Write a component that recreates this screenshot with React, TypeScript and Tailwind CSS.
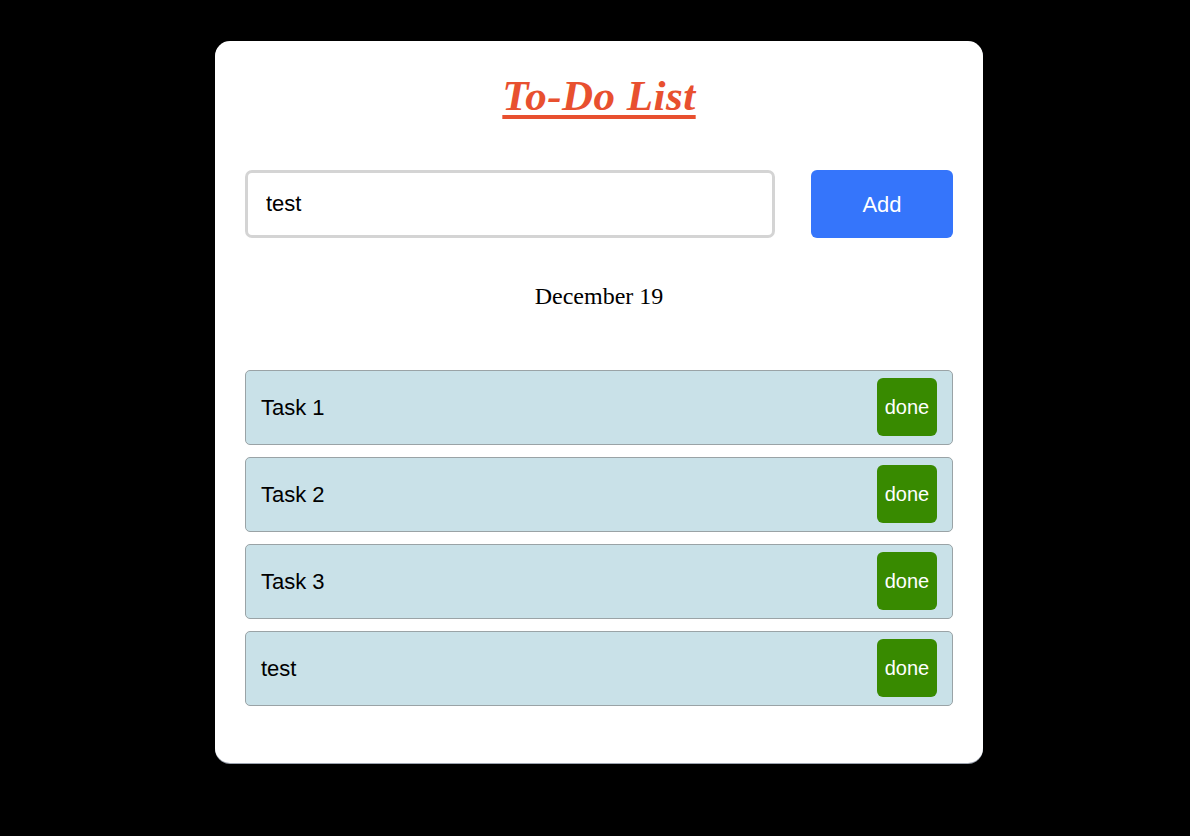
import { useState } from "react";

const initialTasks = ["Task 1", "Task 2", "Task 3", "test"];

export default function App() {
  const [text, setText] = useState("test");
  const [tasks, setTasks] = useState(initialTasks);

  return (
    <div className="flex min-h-[836px] justify-center bg-black pl-[8px] pt-[41px] font-['Liberation_Sans',Arial,sans-serif]">
      <div className="flex h-[722px] w-[768px] flex-col rounded-[15px] bg-white px-[30px] shadow-[0_1px_0_#9ca3af]">
        <h1 className="mt-[30px] text-center font-['Liberation_Serif',serif] text-[43px] font-bold italic leading-[50px] tracking-[0.5px] text-[#e8502f] underline decoration-[4px] underline-offset-[5px]">
          To-Do List
        </h1>

        <div className="mt-[49px] flex items-center justify-between">
          <input
            value={text}
            onChange={(e) => setText(e.target.value)}
            className="h-[68px] w-[530px] rounded-[7px] border-[3px] border-[#d4d4d4] px-[18px] text-[22px] text-black outline-none"
          />
          <button
            onClick={() => text && setTasks([...tasks, text])}
            className="h-[68px] w-[142px] rounded-[6px] bg-[#3575fb] text-[22px] text-white"
          >
            Add
          </button>
        </div>

        <p className="mt-[44px] text-center font-['Liberation_Serif',serif] text-[24px] leading-[28px] text-black">
          December 19
        </p>

        <ul className="mt-[60px] flex flex-col gap-[12px]">
          {tasks.map((t, i) => (
            <li
              key={i}
              className="flex h-[75px] items-center justify-between rounded-[5px] border border-[#9aa3a6] bg-[#c9e1e8] pl-[15px] pr-[15px]"
            >
              <span className="text-[22px] text-black">{t}</span>
              <button
                onClick={() => setTasks(tasks.filter((_, j) => j !== i))}
                className="mb-[1px] h-[58px] w-[60px] rounded-[6px] bg-[#388a00] text-[20px] text-white"
              >
                done
              </button>
            </li>
          ))}
        </ul>
      </div>
    </div>
  );
}
